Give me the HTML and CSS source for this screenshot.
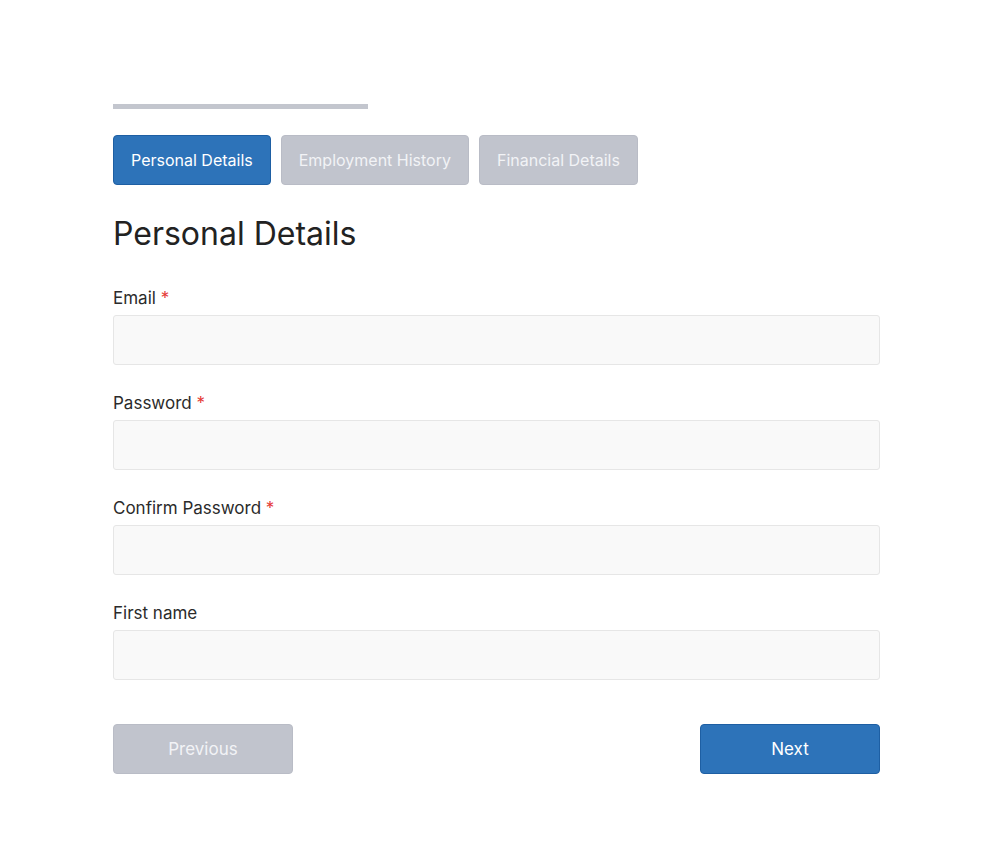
FILE: index.html
```html
<!DOCTYPE html>
<html lang="en">
<head>
    <meta charset="UTF-8">
    <meta name="viewport" content="width=device-width, initial-scale=1.0">
    <title>Multi-step Form</title>
    <link rel="stylesheet" href="styles.css">
</head>
<body>
    <div class="wizard">
        <div class="progress"><div class="progress-fill"></div></div>

        <div class="tabs">
            <button class="tab active">Personal Details</button>
            <button class="tab">Employment History</button>
            <button class="tab">Financial Details</button>
        </div>

        <h1>Personal Details</h1>

        <form class="form">
            <div class="field">
                <label for="email">Email <span class="req">*</span></label>
                <input id="email" type="email">
            </div>
            <div class="field">
                <label for="password">Password <span class="req">*</span></label>
                <input id="password" type="password">
            </div>
            <div class="field">
                <label for="confirm">Confirm Password <span class="req">*</span></label>
                <input id="confirm" type="password">
            </div>
            <div class="field">
                <label for="firstname">First name</label>
                <input id="firstname" type="text">
            </div>

            <div class="nav">
                <button type="button" class="btn btn-muted">Previous</button>
                <button type="button" class="btn btn-primary">Next</button>
            </div>
        </form>
    </div>
</body>
</html>
```

FILE: styles.css
```css
body {
    font-family: 'Inter', 'Liberation Sans', sans-serif;
    background-color: #fff;
    color: #2b2b2b;
    margin: 0;
    padding: 0;
}

.wizard {
    width: 767px;
    margin-left: 113px;
    padding-top: 104px;
}

.progress {
    height: 5px;
    width: 100%;
}

.progress-fill {
    width: 255px;
    height: 5px;
    background-color: #c3c6ce;
}

.tabs {
    display: flex;
    gap: 10px;
    margin-top: 26px;
}

.tab {
    height: 50px;
    padding: 0 17px;
    font-family: inherit;
    font-size: 16px;
    color: #f2f3f6;
    background-color: #c1c4cd;
    border: 1px solid #b9bcc6;
    border-radius: 4px;
    cursor: pointer;
}

.tab.active {
    background-color: #2d73b9;
    border-color: #1e5fa3;
    color: #fff;
}

h1 {
    font-size: 32px;
    font-weight: 400;
    line-height: 40px;
    color: #222;
    margin: 29px 0 0;
}

.form {
    margin-top: 31px;
}

.field {
    margin-bottom: 25px;
}

label {
    display: block;
    font-size: 17px;
    line-height: 24px;
    color: #2b2b2b;
    padding-top: 1px;
    margin-bottom: 5px;
}

.req {
    color: #e53935;
}

input {
    display: block;
    box-sizing: border-box;
    width: 100%;
    height: 50px;
    padding: 0 12px;
    font-family: inherit;
    font-size: 16px;
    background-color: #f9f9f9;
    border: 1px solid #e6e6e6;
    border-radius: 3px;
}

.nav {
    display: flex;
    justify-content: space-between;
    margin-top: 44px;
}

.btn {
    width: 180px;
    height: 50px;
    font-family: inherit;
    font-size: 17px;
    border-radius: 4px;
    cursor: pointer;
}

.btn-muted {
    background-color: #c1c4cd;
    border: 1px solid #b9bcc6;
    color: #f2f3f6;
}

.btn-primary {
    background-color: #2d73b9;
    border: 1px solid #1e5fa3;
    color: #fff;
}
```
